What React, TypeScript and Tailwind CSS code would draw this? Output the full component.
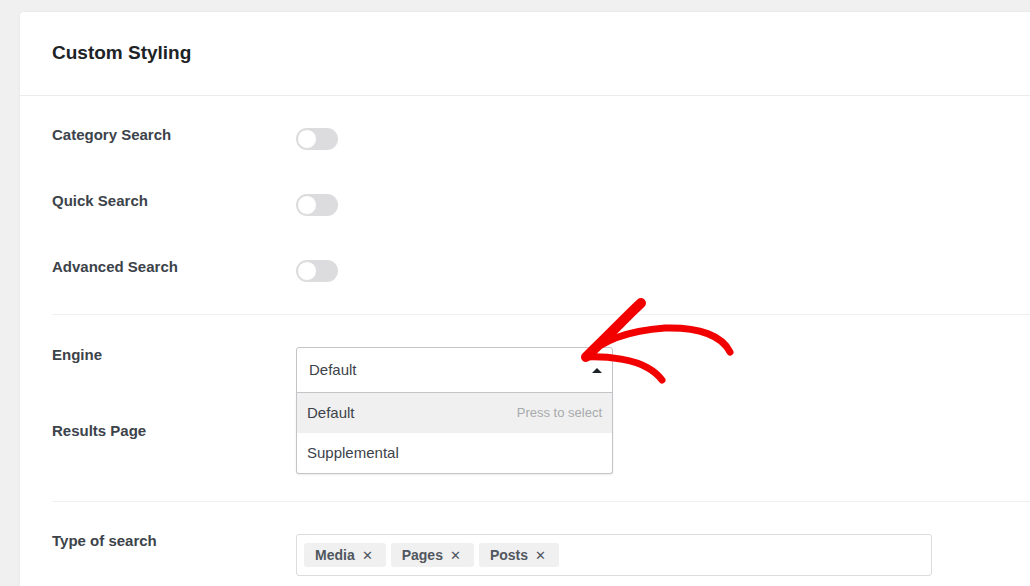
import React from "react";

const font = { fontFamily: '"Liberation Sans", Arial, sans-serif' };

function Toggle() {
  return (
    <div className="mt-[3px] flex h-[22px] w-[42px] items-center rounded-full bg-[#dcdcde] px-[1px]">
      <div className="h-[20px] w-[20px] rounded-full border border-[#dcdcde] bg-white" />
    </div>
  );
}

function Tag({ label }: { label: string }) {
  return (
    <div className="flex h-[24px] items-center gap-[7px] rounded-[3px] bg-[#f0f0f1] pl-[11px] pr-[13px] text-[14px] font-bold text-[#50575e]">
      <span>{label}</span>
      <span className="text-[13px] font-normal leading-none">✕</span>
    </div>
  );
}

export default function App() {
  return (
    <div
      className="relative h-[586px] w-[1030px] overflow-hidden bg-[#f0f0f0] pl-[20px] pt-[12px]"
      style={font}
    >
      <div className="h-[600px] w-[1030px] rounded-tl-[3px] bg-white shadow-[0_0_2px_rgba(0,0,0,0.08)]">
        {/* Header */}
        <div className="flex h-[84px] items-center border-b border-[#ebebeb] pl-[32px]">
          <h1 className="text-[19px] font-bold text-[#1d2327]">Custom Styling</h1>
        </div>

        {/* Toggles */}
        <div className="ml-[32px] flex flex-col gap-[41px] border-b border-[#f0f0f0] pb-[32px] pt-[29px]">
          {["Category Search", "Quick Search", "Advanced Search"].map((l) => (
            <div key={l} className="flex h-[25px] items-start">
              <div className="w-[244px] text-[15px] font-bold leading-[20px] text-[#3c434a]">{l}</div>
              <Toggle />
            </div>
          ))}
        </div>

        {/* Engine / Results Page */}
        <div className="ml-[32px] flex flex-col border-b border-[#f0f0f0] pb-[31px] pt-[30px]">
          <div className="flex h-[76px] items-start">
            <div className="w-[244px] text-[15px] font-bold leading-[20px] text-[#3c434a]">Engine</div>
            <div className="relative mt-[2px] w-[317px]">
              <div className="flex h-[46px] items-center justify-between rounded-t-[3px] border border-[#c3c4c7] pl-[12px] pr-[10px] text-[15px] text-[#3c434a]">
                <span>Default</span>
                <span className="h-0 w-0 border-x-[5px] border-b-[5px] border-x-transparent border-b-[#1d2327]" />
              </div>
              <div className="absolute left-0 top-[45px] z-10 w-[317px] rounded-b-[3px] border border-t-0 border-[#c3c4c7] bg-white shadow-[0_1px_2px_rgba(0,0,0,0.08)]">
                <div className="flex h-[41px] items-center justify-between border-t border-[#c3c4c7] bg-[#f0f0f0] pl-[10px] pr-[10px]">
                  <span className="text-[15px] text-[#3c434a]">Default</span>
                  <span className="text-[13px] text-[#a7aaad]">Press to select</span>
                </div>
                <div className="flex h-[40px] items-center pl-[10px] text-[15px] text-[#3c434a]">Supplemental</div>
              </div>
            </div>
          </div>
          <div className="flex h-[49px] items-start">
            <div className="w-[244px] text-[15px] font-bold leading-[20px] text-[#3c434a]">Results Page</div>
            <div className="mt-[2px] h-[46px] w-[317px] rounded-[3px] border border-[#c3c4c7]" />
          </div>
        </div>

        {/* Type of search */}
        <div className="ml-[32px] flex items-start pt-[29px]">
          <div className="w-[244px] text-[15px] font-bold leading-[20px] text-[#3c434a]">Type of search</div>
          <div className="mt-[3px] flex h-[42px] w-[636px] items-center gap-[5px] rounded-[3px] border border-[#dcdcde] pl-[7px]">
            <Tag label="Media" />
            <Tag label="Pages" />
            <Tag label="Posts" />
          </div>
        </div>
      </div>

      {/* Red annotation arrow */}
      <svg
        className="pointer-events-none absolute left-0 top-0 z-20"
        width="1030"
        height="586"
        viewBox="0 0 1030 586"
      >
        <g fill="none" stroke="#f20000" strokeLinecap="round" strokeLinejoin="round">
          <path d="M641 303 C630 313 612 332 586 357" strokeWidth="10" />
          <path d="M586 357 C600 342 625 331 665 328 C700 327 722 336 730 352" strokeWidth="7" />
          <path d="M586 357 C610 356 635 360 648 368 C655 372 659 376 662 380" strokeWidth="7" />
        </g>
      </svg>
    </div>
  );
}
